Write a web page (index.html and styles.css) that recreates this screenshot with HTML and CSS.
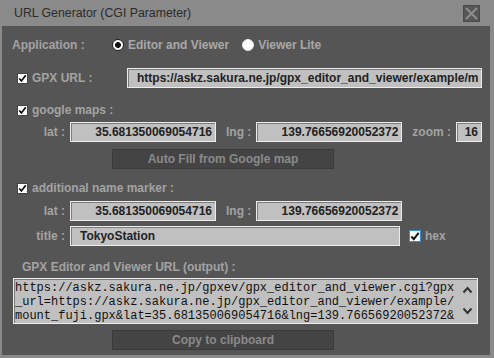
FILE: index.html
```html
<!DOCTYPE html>
<html lang="en">
<head>
    <meta charset="UTF-8">
    <title>URL Generator (CGI Parameter)</title>
    <link rel="stylesheet" href="styles.css">
</head>
<body>
    <div class="dialog">
        <div class="titlebar">
            <span class="title">URL Generator (CGI Parameter)</span>
            <span class="close">
                <svg width="15" height="15" viewBox="0 0 15 15"><path d="M2 2L13 13M13 2L2 13" stroke="#8e8e8e" stroke-width="2"/></svg>
            </span>
        </div>

        <div class="content">
            <div class="row app-row">
                <span class="app-label">Application :</span>
                <span class="radio checked"></span><span class="opt">Editor and Viewer</span>
                <span class="radio second"></span><span class="opt">Viewer Lite</span>
            </div>

            <div class="row check-row gpx-row">
                <span class="check"><svg width="11" height="11" viewBox="0 0 11 11"><path d="M1.5 5.5L4.2 8.5L9.5 1.5" fill="none" stroke="#111" stroke-width="2.2"/></svg></span>
                <span class="check-label">GPX URL :</span>
                <input type="text" class="text gpx-url" value="https://askz.sakura.ne.jp/gpx_editor_and_viewer/example/mount_fuji.gpx" readonly>
            </div>

            <div class="row check-row maps-row">
                <span class="check"><svg width="11" height="11" viewBox="0 0 11 11"><path d="M1.5 5.5L4.2 8.5L9.5 1.5" fill="none" stroke="#111" stroke-width="2.2"/></svg></span>
                <span class="check-label">google maps :</span>
            </div>

            <div class="row field-row maps-fields">
                <span class="field-label">lat :</span>
                <input type="text" class="text num" value="35.681350069054716" readonly>
                <span class="field-label inline">lng :</span>
                <input type="text" class="text num" value="139.76656920052372" readonly>
                <span class="field-label inline">zoom :</span>
                <input type="text" class="text zoom" value="16" readonly>
            </div>

            <div class="row btn-row autofill-row">
                <button class="btn">Auto Fill from Google map</button>
            </div>

            <div class="row check-row marker-row">
                <span class="check"><svg width="11" height="11" viewBox="0 0 11 11"><path d="M1.5 5.5L4.2 8.5L9.5 1.5" fill="none" stroke="#111" stroke-width="2.2"/></svg></span>
                <span class="check-label">additional name marker :</span>
            </div>

            <div class="row field-row marker-fields">
                <span class="field-label">lat :</span>
                <input type="text" class="text num" value="35.681350069054716" readonly>
                <span class="field-label inline">lng :</span>
                <input type="text" class="text num" value="139.76656920052372" readonly>
            </div>

            <div class="row field-row title-row">
                <span class="field-label">title :</span>
                <input type="text" class="text title-input" value="TokyoStation" readonly>
                <span class="check hex"><svg width="11" height="11" viewBox="0 0 11 11"><path d="M1.5 5.5L4.2 8.5L9.5 1.5" fill="none" stroke="#111" stroke-width="2.2"/></svg></span>
                <span class="check-label">hex</span>
            </div>

            <div class="row output-label">GPX Editor and Viewer URL (output) :</div>

            <div class="output">
                <div class="output-text">https://askz.sakura.ne.jp/gpxev/gpx_editor_and_viewer.cgi?gpx
_url=https://askz.sakura.ne.jp/gpx_editor_and_viewer/example/
mount_fuji.gpx&amp;lat=35.681350069054716&amp;lng=139.76656920052372&amp;</div>
                <div class="scroll">
                    <svg width="11" height="8" viewBox="0 0 11 8"><path d="M1.5 6.5L5.5 2L9.5 6.5" fill="none" stroke="#333" stroke-width="2"/></svg>
                    <svg width="11" height="8" viewBox="0 0 11 8"><path d="M1.5 1.5L5.5 6L9.5 1.5" fill="none" stroke="#333" stroke-width="2"/></svg>
                </div>
            </div>

            <div class="row btn-row copy-row">
                <button class="btn">Copy to clipboard</button>
            </div>
        </div>
    </div>
</body>
</html>
```

FILE: styles.css
```css
body {
    margin: 0;
    background: #555;
    font-family: 'Liberation Sans', Arial, sans-serif;
}
.dialog {
    width: 494px;
    height: 358px;
    box-sizing: border-box;
    padding: 0 4px 3px 2px;
    background: #8a8a8a;
    display: flex;
    flex-direction: column;
}
.titlebar {
    height: 26px;
    flex: none;
    display: flex;
    align-items: center;
    justify-content: space-between;
    padding: 0 10px 0 12px;
}
.title {
    font-size: 12.3px;
    color: #2b2b2b;
}
.close {
    width: 15px;
    height: 15px;
    background: #575757;
    border: 1px solid #4a4a4a;
    display: flex;
}
.content {
    flex: 1;
    background: #555;
    padding: 0 8px 0 10px;
    font-size: 12px;
    font-weight: bold;
    color: #a3a3a3;
}
.row {
    display: flex;
    align-items: center;
    height: 20px;
}

/* vertical spacing, row by row */
.app-row { margin-top: 9px; }
.gpx-row { margin-top: 13px; }
.maps-row { margin-top: 12px; }
.maps-fields { margin-top: 2px; }
.autofill-row { margin-top: 7px; }
.marker-row { margin-top: 9px; }
.marker-fields { margin-top: 3px; }
.title-row { margin-top: 5px; }
.output-label { margin-top: 11px; padding-left: 10px; }
.output { margin-top: 1px; }
.copy-row { margin-top: 6px; }

.app-label {
    width: 100px;
}
.radio {
    width: 10px;
    height: 10px;
    border-radius: 50%;
    background: #fff;
    border: 1px solid #e6e6e6;
    margin-right: 4px;
}
.radio.checked {
    border-color: #222;
    background: radial-gradient(circle, #111 2.6px, #fff 3.2px);
}
.radio.second {
    margin-left: 13px;
}
.opt {
    color: #a8a8a8;
}

.check-row {
    padding-left: 5px;
}
.check {
    width: 11px;
    height: 11px;
    box-sizing: border-box;
    background: #fff;
    border: 1px solid #444;
    display: flex;
    align-items: center;
    justify-content: center;
}
.check svg {
    margin-top: 1px;
}
.check.hex {
    width: 12px;
    height: 12px;
    margin-left: 9px;
    border-color: #2f8fe0;
}
.check-label {
    margin-left: 4px;
}

.text {
    height: 20px;
    box-sizing: border-box;
    border: 1px solid #ececec;
    box-shadow: inset 1px 1px 0 #7c7c7c;
    background: #c0c0c0;
    color: #222;
    font-family: 'Liberation Sans', Arial, sans-serif;
    font-size: 12px;
    font-weight: bold;
    padding: 0 3px 0 9px;
    outline: none;
}
.gpx-url {
    width: 355px;
    margin-left: auto;
}
.field-label {
    width: 53px;
    text-align: right;
    margin-right: 5px;
}
.field-label.inline {
    width: auto;
    margin-left: 10px;
}
.num {
    width: 146px;
    text-align: right;
}
.zoom {
    width: 26px;
    text-align: right;
    padding: 0 3px 0 2px;
}
.title-input {
    width: 330px;
}

.btn-row {
    padding-left: 100px;
}
.btn {
    width: 222px;
    height: 20px;
    background: #444;
    border: 1px solid #3b3b3b;
    color: #8a8a8a;
    font-family: 'Liberation Sans', Arial, sans-serif;
    font-size: 12px;
    font-weight: bold;
    padding: 0;
}

.output {
    width: 465px;
    height: 46px;
    margin-left: 1px;
    box-sizing: border-box;
    border: 1px solid #ececec;
    box-shadow: inset 1px 1px 0 #7c7c7c;
    background: #c0c0c0;
    display: flex;
}
.output-text {
    flex: 1;
    overflow: hidden;
    white-space: pre;
    font-family: 'Liberation Mono', 'Courier New', monospace;
    font-size: 12px;
    font-weight: normal;
    line-height: 14px;
    color: #111;
    padding: 2px 0 0 1px;
}
.scroll {
    width: 19px;
    display: flex;
    flex-direction: column;
    align-items: center;
    justify-content: space-between;
    padding: 7px 0 8px;
}
```
